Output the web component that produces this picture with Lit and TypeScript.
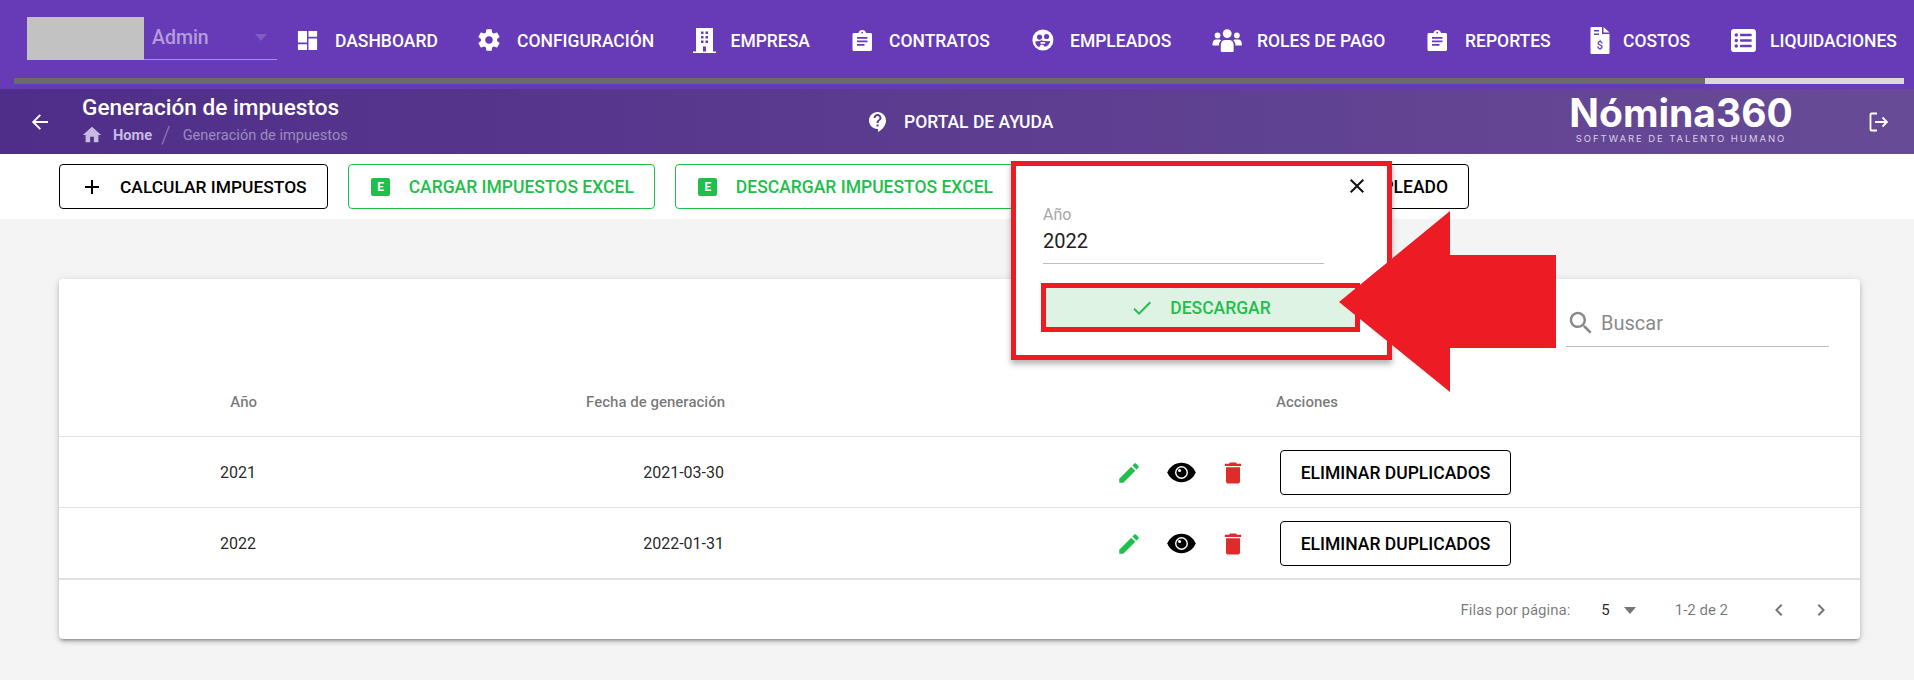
import { LitElement, html, css, svg } from "lit";
import { customElement } from "lit/decorators.js";

const P = "#673ab7";
const clipIcon = svg`<path fill="currentColor" fill-rule="evenodd" d="M1.500 3H6c.25-1.700 1.900-3 3.750-3s3.500 1.300 3.750 3H18c.9 0 1.500.6 1.500 1.500v15c0 .9-.6 1.500-1.500 1.500H1.500C.6 21 0 20.400 0 19.500v-15C0 3.600.6 3 1.500 3zM9.750 1.800a.9.9 0 1 0 0 1.800.9.9 0 0 0 0-1.800zM4.500 7v1.700h10.500V7zM4.500 10.500v1.700h10.500v-1.700zM4.500 14v1.700h7.500V14z"/>`;
const paths: Record<string, any> = {
  dashboard: svg`<path fill="currentColor" d="M2 2h9.500v12H2zM2 16h9.500v6H2zM13 2h9v6h-9zM13 10h9v12h-9z"/>`,
  cog: svg`<path fill="currentColor" d="M19.430 12.980c.04-.32.07-.64.07-.98s-.03-.66-.07-.98l2.110-1.650c.19-.15.24-.42.12-.64l-2-3.460c-.12-.22-.39-.3-.61-.22l-2.490 1c-.52-.4-1.080-.73-1.690-.98l-.38-2.650C14.460 2.180 14.250 2 14 2h-4c-.25 0-.46.18-.49.42l-.38 2.650c-.61.25-1.170.59-1.690.98l-2.490-1c-.23-.09-.49 0-.61.22l-2 3.460c-.13.22-.07.49.12.64l2.110 1.650c-.04.32-.07.65-.07.98s.03.66.07.98l-2.110 1.650c-.19.15-.24.42-.12.64l2 3.460c.12.22.39.3.61.22l2.490-1c.52.4 1.080.73 1.690.98l.38 2.650c.03.24.24.42.49.42h4c.25 0 .46-.18.49-.42l.38-2.650c.61-.25 1.170-.59 1.690-.98l2.490 1c.23.09.49 0 .61-.22l2-3.460c.12-.22.07-.49-.12-.64l-2.110-1.650zM12 15.500c-1.930 0-3.500-1.570-3.500-3.500s1.570-3.500 3.500-3.500 3.500 1.570 3.500 3.500-1.570 3.500-3.500 3.500z"/>`,
  building: svg`<path fill="currentColor" fill-rule="evenodd" d="M3 0h17v23.500h3V25H0v-1.500h3zM8 3.500h2.500v2.500H8zM12.500 3.500H15v2.500h-2.500zM8 8h2.500v2.500H8zM12.500 8H15v2.500h-2.500zM8 12.500h2.500V15H8zM12.500 12.500H15V15h-2.500zM10 18.500h3v5h-3z"/>`,
  clip: clipIcon,
  face: svg`<circle cx="12" cy="12" r="11.500" fill="currentColor"/><circle cx="8.300" cy="8.800" r="2.800" fill="${P}"/><circle cx="16" cy="8.200" r="2.800" fill="${P}"/><path fill="${P}" d="M3.600 13.500c2.600 0 5.200-.2 7.200-1.200 1.700.9 5.300 1.300 9.200.7-.5 3.700-3.200 6-6.300 6.300-.6-1.400-1.600-2.300-2.800-2.300-1.500 0-2.200 1-2.700 2.700-2.600-.8-4.300-3.100-4.600-6.200z"/><path fill="currentColor" d="M9.300 14.300h5.200v1.800H9.300z"/>`,
  users: svg`<g fill="currentColor"><circle cx="16" cy="5" r="4.800"/><circle cx="5.500" cy="7" r="3.100"/><circle cx="26.500" cy="7" r="3.100"/><path d="M9 24v-6.500C9 14 11 12 14 12h4c3 0 5 2 5 5.500V24c0 .6-.4 1-1 1H10c-.6 0-1-.4-1-1z"/><path d="M0 17c0-3.500 1.500-5.500 4-5.500h3.500c.8 0 1.500.3 2 .8C8 13.500 7 15.500 7 18H1c-.6 0-1-.4-1-1zM32 17c0-3.500-1.500-5.500-4-5.500h-3.500c-.8 0-1.500.3-2 .8 1.500 1.200 2.500 3.200 2.500 5.700h6c.6 0 1-.4 1-1z"/></g>`,
  doc: svg`<path fill="currentColor" d="M0 1a1 1 0 0 1 1-1h10.500v7H19v19a1 1 0 0 1-1 1H1a1 1 0 0 1-1-1zM13 0l6 5.500h-6z"/><path fill="${P}" d="M3.500 3h5v1.500h-5zM3.500 6.500h5V8h-5z"/><text x="9.500" y="22" text-anchor="middle" font-family="Roboto, sans-serif" font-size="11" font-weight="500" fill="${P}">$</text>`,
  list: svg`<path fill="currentColor" fill-rule="evenodd" d="M3 0h20c1.700 0 3 1.300 3 3v18c0 1.700-1.300 3-3 3H3c-1.700 0-3-1.300-3-3V3c0-1.700 1.300-3 3-3zM5.500 4.500a1.800 1.800 0 1 0 0 3.600 1.800 1.800 0 0 0 0-3.600zM9.500 5v2.500h12V5zM5.500 10.200a1.800 1.800 0 1 0 0 3.600 1.800 1.800 0 0 0 0-3.600zM9.500 10.800v2.500h12v-2.500zM5.500 16a1.800 1.800 0 1 0 0 3.600 1.800 1.800 0 0 0 0-3.600zM9.500 16.500V19h12v-2.500z"/>`,
  back: svg`<path fill="none" stroke="currentColor" stroke-width="1.900" d="M20 12H5.500M12.300 4.900 5.200 12l7.100 7.100"/>`,
  home: svg`<path fill="currentColor" d="M10 20v-6h4v6h5v-8h3L12 3 2 12h3v8z"/>`,
  help: svg`<path fill="currentColor" d="M11.500 2C6.810 2 3 5.810 3 10.500S6.810 19 11.500 19h.5v3c4.860-2.340 8-7 8-11.500C20 5.810 16.190 2 11.500 2zm1 14.500h-2v-2h2v2zm0-3.500h-2c0-3.250 3-3 3-5 0-1.100-.9-2-2-2s-2 .9-2 2h-2c0-2.210 1.790-4 4-4s4 1.790 4 4c0 2.500-3 2.750-3 5z"/>`,
  logout: svg`<path fill="none" stroke="currentColor" stroke-width="1.800" d="M11 3.500H5.500a1 1 0 0 0-1 1v15a1 1 0 0 0 1 1H11M9 12h12M16.500 7.500 21 12l-4.500 4.500"/>`,
  plus: svg`<path fill="currentColor" d="M19 13h-6v6h-2v-6H5v-2h6V5h2v6h6v2z"/>`,
  close: svg`<path fill="currentColor" d="M19 6.410 17.590 5 12 10.590 6.410 5 5 6.410 10.590 12 5 17.590 6.410 19 12 13.410 17.590 19 19 17.590 13.410 12z"/>`,
  check: svg`<path fill="currentColor" d="M9 16.170 4.830 12l-1.420 1.410L9 19 21 7l-1.410-1.410z"/>`,
  search: svg`<path fill="currentColor" d="M15.500 14h-.79l-.28-.27C15.410 12.590 16 11.110 16 9.500 16 5.910 13.090 3 9.500 3S3 5.910 3 9.500 5.910 16 9.500 16c1.610 0 3.090-.59 4.230-1.570l.27.28v.79l5 4.990L20.490 19l-4.990-5zm-6 0C7.010 14 5 11.990 5 9.500S7.010 5 9.500 5 14 7.010 14 9.500 11.990 14 9.500 14z"/>`,
  edit: svg`<path fill="currentColor" d="M3 17.250V21h3.750L17.810 9.940l-3.750-3.750L3 17.250zM20.710 7.040c.39-.39.39-1.020 0-1.410l-2.340-2.340c-.39-.39-1.020-.39-1.410 0l-1.830 1.830 3.750 3.750 1.830-1.830z"/>`,
  eye: svg`<path fill="currentColor" d="M12 4.500C7 4.500 2.730 7.610 1 12c1.730 4.390 6 7.500 11 7.500s9.270-3.110 11-7.500c-1.730-4.390-6-7.500-11-7.500z"/><circle cx="12" cy="12" r="5" fill="#fff"/><circle cx="12" cy="12" r="3.900" fill="currentColor"/><circle cx="10.500" cy="10.500" r="1.200" fill="#fff"/>`,
  trash: svg`<path fill="currentColor" d="M6 19c0 1.100.9 2 2 2h8c1.100 0 2-.9 2-2V7H6v12zM19 4h-3.500l-1-1h-5l-1 1H5v2h14V4z"/>`,
  left: svg`<path fill="currentColor" d="M15.410 7.410 14 6l-6 6 6 6 1.410-1.410L10.830 12z"/>`,
  right: svg`<path fill="currentColor" d="M10 6 8.590 7.410 13.170 12l-4.580 4.580L10 18l6-6z"/>`,
};

const icon = (name: string, w = 24, h = w, vb = "0 0 24 24") =>
  html`<svg class="ic" width=${w} height=${h} viewBox=${vb}>${paths[name]}</svg>`;

const nav = [
  { t: "DASHBOARD", i: icon("dashboard", 23, 23) },
  { t: "CONFIGURACIÓN", i: icon("cog", 26, 26) },
  { t: "EMPRESA", i: icon("building", 23, 25, "-2 0 23 25") },
  { t: "CONTRATOS", i: icon("clip", 19.5, 21, "-1.500 0 19.500 21") },
  { t: "EMPLEADOS", i: icon("face", 22, 22, "-1 0 24 24") },
  { t: "ROLES DE PAGO", i: icon("users", 31, 23, "2.500 0 32 25") },
  { t: "REPORTES", i: icon("clip", 19.5, 21, "-.5 0 19.500 21") },
  { t: "COSTOS", i: icon("doc", 19, 26, "-4.500 0 19 26") },
  { t: "LIQUIDACIONES", i: icon("list", 25, 23, "-1 0 26 24") },
];

const rows = [
  ["2021", "2021-03-30"],
  ["2022", "2022-01-31"],
];

@customElement("app-root")
export class AppRoot extends LitElement {
  static styles = css`
    :host {
      display: block;
      height: 680px;
      overflow: hidden;
      position: relative;
      background: #f4f4f4;
      font-family: Roboto, "Liberation Sans", sans-serif;
      color: rgba(0, 0, 0, 0.87);
    }
    .ic { display: block; flex: none; overflow: visible; }
    .top { background: #673ab7; height: 89px; color: #fff; }
    .toprow { display: flex; height: 78px; padding-left: 27px; box-sizing: border-box; }
    .select {
      width: 250px; height: 43px; margin-top: 17px; flex: none;
      display: flex; border-bottom: 1px solid #a991d6; box-sizing: border-box;
    }
    .mask { width: 117px; height: 43px; background: #c2c2c2; flex: none; }
    .admin { font-size: 19.5px; font-weight: 500; color: #b39ddb; margin-left: 8px; line-height: 42px; flex: 1; }
    .caret { width: 0; height: 0; border: 6px solid transparent; border-top: 7px solid #7e5cc0; border-bottom: 0; margin: 17px 10px 0 0; }
    .nav {
      margin-left: 18px; margin-top: 4px; height: 74px;
      display: grid; align-items: center;
      grid-template-columns: 182px 213.5px 158.5px 181px 187px 208px 158px 147px auto;
    }
    .navitem { display: flex; align-items: center; font-size: 17.5px; font-weight: 500; white-space: nowrap; }
    .navicon { width: 24px; display: flex; justify-content: center; margin: -2px 16px 0 0; flex: none; }
    .progress { margin: 0 10px 0 14px; height: 6px; background: #6b6b6b; display: flex; justify-content: flex-end; }
    .progress div { width: 199px; background: #d9d9d9; }
    .hdr {
      height: 65px; color: #fff;
      background: linear-gradient(90deg, #4f2e89, #684b96);
      display: grid; grid-template-columns: 82px 784px 703px 297px 48px; align-items: center;
    }
    .backc { padding-left: 28px; }
    .title { font-size: 22.6px; font-weight: 500; line-height: 26px; margin-top: -1px; }
    .crumbs { display: flex; align-items: center; font-size: 14.6px; height: 24px; color: #9d8bbf; margin-top: 2px; margin-left: -1px; }
    .crumbs b { color: #c8bbe0; font-weight: 700; margin-left: 10px; }
    .slash { font-size: 24px; font-weight: 300; margin: 0 12px 0 9px; color: #8f7ab5; }
    .crumbs .ic { color: #c8bbe0; }
    .help { display: flex; align-items: center; gap: 14px; font-size: 17.5px; font-weight: 500; }
    .logo { display: flex; flex-direction: column; align-items: center; width: 222px; margin-left: 1px; margin-top: -5px; }
    .logo .n { font-family: Inter, sans-serif; font-weight: 700; font-size: 39px; line-height: 40px; white-space: nowrap; }
    .logo .s { font-family: Inter, sans-serif; font-size: 9.5px; line-height: 12px; letter-spacing: 1.95px; color: #d8d0e6; white-space: nowrap; }
    .tools { height: 65px; background: #fff; display: flex; gap: 20px; align-items: center; padding-left: 59px; box-sizing: border-box; }
    .btn {
      height: 45px; box-sizing: border-box; border: 1px solid #000; border-radius: 4px;
      padding: 0 20px; display: flex; align-items: center; gap: 16px;
      font-size: 17.4px; font-weight: 500; color: #000; background: #fff; white-space: nowrap; flex: none;
    }
    .btn.g { border-color: #1fbf4c; color: #1fbf4c; font-size: 17.5px; }
    .btn.w { width: 435px; justify-content: flex-end; font-size: 17.5px; }
    .xl { width: 24px; display: flex; justify-content: center; }
    .xl span {
      width: 19px; height: 18px; background: #1fbf4c; color: #fff; border-radius: 2px;
      font-size: 12px; font-weight: 700; line-height: 18px; text-align: center; display: block;
    }
    .card {
      margin: 60px 0 0 59px; width: 1801px; height: 360px; background: #fff; border-radius: 4px;
      box-shadow: 0 3px 3px -2px rgba(0,0,0,.3), 0 3px 4px 0 rgba(0,0,0,.16), 0 1px 8px 0 rgba(0,0,0,.12);
      display: flex; flex-direction: column;
    }
    .ctop { height: 68px; display: flex; justify-content: flex-end; padding-right: 31px; box-sizing: border-box; padding-top: 21px; }
    .search {
      width: 263px; height: 47px; border-bottom: 1px solid #bdbdbd; box-sizing: border-box;
      display: flex; align-items: center; gap: 5px; color: #8a8a8a; font-size: 20px;
    }
    .row { display: grid; grid-template-columns: 197px 468px 1fr; align-items: center; font-size: 16px; border-bottom: 1px solid #e0e0e0; box-sizing: border-box; }
    .row > div:nth-child(-n+2) { text-align: right; }
    .row.h { height: 90px; font-size: 15px; font-weight: 500; color: rgba(0,0,0,.54); padding-top: 21px; grid-template-columns: 198px 468px 1fr; }
    .row.b { height: 71px; padding-top: 1px; }
    .row.last { height: 72px; border-bottom-width: 2px; }
    .hact { padding-left: 551px; }
    .act { display: flex; align-items: center; padding-left: 379px; }
    .act .box { width: 52px; display: flex; justify-content: center; flex: none; }
    .act .btn { margin-left: 21px; width: 231px; justify-content: center; padding: 0; height: 45px; font-size: 17.5px; }
    .pen { color: #1fbf4c; }
    .eye { color: #000; }
    .del { color: #e02b2b; }
    .foot { height: 59px; display: flex; align-items: center; justify-content: flex-end; padding-right: 27px; font-size: 15px; color: rgba(0,0,0,.54); }
    .foot .five { color: rgba(0,0,0,.87); margin-left: 31px; }
    .foot .tri { width: 0; height: 0; border: 6px solid transparent; border-top: 7px solid #757575; border-bottom: 0; margin: 2px 0 0 14px; }
    .foot .range { margin-left: 39px; }
    .foot .chev { margin-left: 39px; color: #757575; }
    .foot .chev2 { margin-left: 18px; color: #757575; }
    .pop {
      position: absolute; left: 1011px; top: 161px; width: 381px; height: 199px; box-sizing: border-box;
      background: #fff; border: 5px solid #ed1c24;
      box-shadow: 0 4px 6px rgba(0,0,0,.3); display: flex; flex-direction: column;
    }
    .pclose { display: flex; justify-content: flex-end; padding: 8px 18px 0 0; color: #111; }
    .plabel { margin: 7px 0 0 27px; font-size: 16px; line-height: 20px; color: #a6a6a6; }
    .pinput { margin: 2px 0 0 27px; width: 281px; height: 37px; font-size: 20px; line-height: 28px; border-bottom: 1px solid #bdbdbd; box-sizing: border-box; color: #212121; }
    .pbtn {
      margin: 19px 0 0 25px; width: 319px; height: 49px; box-sizing: border-box; flex: none;
      border: 5px solid #ed1c24; background: #dff3e4; color: #1fbf4c;
      display: flex; align-items: center; justify-content: center; gap: 16px; font-size: 17.5px; font-weight: 500;
    }
    .arrow { position: absolute; left: 1339px; top: 211px; display: block; }
  `;

  render() {
    return html`
      <div class="top">
        <div class="toprow">
          <div class="select">
            <div class="mask"></div>
            <div class="admin">Admin</div>
            <div class="caret"></div>
          </div>
          <div class="nav">
            ${nav.map((n) => html`<div class="navitem"><span class="navicon">${n.i}</span>${n.t}</div>`)}
          </div>
        </div>
        <div class="progress"><div></div></div>
      </div>
      <div class="hdr">
        <div class="backc">${icon("back")}</div>
        <div>
          <div class="title">Generación de impuestos</div>
          <div class="crumbs">${icon("home", 22, 22)}<b>Home</b><span class="slash">/</span>Generación de impuestos</div>
        </div>
        <div class="help">${icon("help")}PORTAL DE AYUDA</div>
        <div class="logo">
          <div class="n">Nómina360</div>
          <div class="s">SOFTWARE DE TALENTO HUMANO</div>
        </div>
        <div>${icon("logout")}</div>
      </div>
      <div class="tools">
        <div class="btn">${icon("plus")}CALCULAR IMPUESTOS</div>
        <div class="btn g"><span class="xl"><span>E</span></span>CARGAR IMPUESTOS EXCEL</div>
        <div class="btn g"><span class="xl"><span>E</span></span>DESCARGAR IMPUESTOS EXCEL</div>
        <div class="btn w">EMPLEADO</div>
      </div>
      <div class="card">
        <div class="ctop">
          <div class="search">${icon("search", 30, 30)}Buscar</div>
        </div>
        <div class="row h"><div>Año</div><div>Fecha de generación</div><div class="hact">Acciones</div></div>
        ${rows.map(
          (r, i) => html`<div class="row b ${i === 1 ? "last" : ""}">
            <div>${r[0]}</div><div>${r[1]}</div>
            <div class="act">
              <span class="box pen">${icon("edit", 26, 26)}</span>
              <span class="box eye">${icon("eye", 31, 31)}</span>
              <span class="box del">${icon("trash", 28, 28)}</span>
              <div class="btn">ELIMINAR DUPLICADOS</div>
            </div>
          </div>`
        )}
        <div class="foot">
          <span>Filas por página:</span>
          <span class="five">5</span>
          <span class="tri"></span>
          <span class="range">1-2 de 2</span>
          <span class="chev">${icon("left")}</span>
          <span class="chev2">${icon("right")}</span>
        </div>
      </div>
      <div class="pop">
        <div class="pclose">${icon("close")}</div>
        <div class="plabel">Año</div>
        <div class="pinput">2022</div>
        <div class="pbtn">${icon("check")}DESCARGAR</div>
      </div>
      <svg class="arrow" width="218" height="182" viewBox="0 0 218 182">
        <path fill="#ed1c24" d="M0 91 111 0V44H217V137H111V181z"/>
      </svg>
    `;
  }
}
